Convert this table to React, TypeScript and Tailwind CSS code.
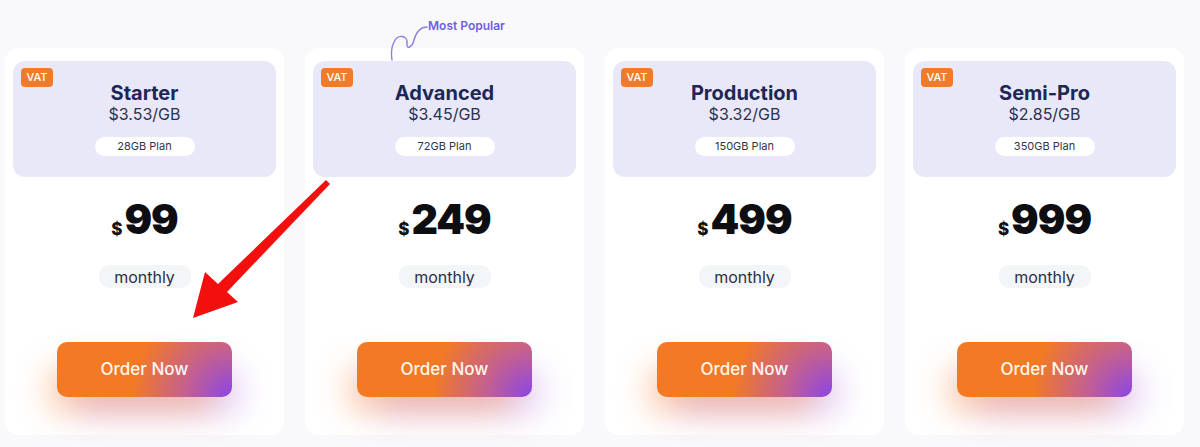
import React from 'react'

const PLANS = [
  { name: 'Starter', perGb: '$3.53/GB', plan: '28GB Plan', price: '99' },
  { name: 'Advanced', perGb: '$3.45/GB', plan: '72GB Plan', price: '249', popular: true },
  { name: 'Production', perGb: '$3.32/GB', plan: '150GB Plan', price: '499' },
  { name: 'Semi-Pro', perGb: '$2.85/GB', plan: '350GB Plan', price: '999' },
]

function PlanCard({ name, perGb, plan, price, popular }: (typeof PLANS)[number]) {
  return (
    <div className="relative flex h-[387px] flex-col items-center rounded-[14px] bg-white px-2 pt-[13px]">
      {popular && (
        <span className="absolute left-[123px] top-[-31px] text-[12px] font-semibold text-[#6d5fe0]">Most Popular</span>
      )}
      <div className="relative flex h-[116px] w-full flex-col items-center rounded-[12px] bg-[#e9e8f8] pt-[21px]">
        <span className="absolute left-2 top-[7px] flex h-[19px] w-[32px] items-center justify-center rounded-[4px] bg-[#f07b2b] text-[11px] font-medium text-white">
          VAT
        </span>
        <h3 className="text-[20px] font-bold leading-[22px] text-[#1d2756]">{name}</h3>
        <p className="text-[16px] leading-[20px] text-[#2c3150]">{perGb}</p>
        <span className="mt-[13px] flex h-[19px] w-[100px] items-center justify-center rounded-full bg-white text-[11px] text-[#333642]">
          {plan}
        </span>
      </div>

      <div className="mt-[20px] flex items-end">
        <span className="mb-[3px] mr-[2px] text-[17px] font-extrabold leading-none text-[#111]">$</span>
        <span className="text-[41px] font-black leading-[44px] tracking-[-1px] text-[#0d0d12]">{price}</span>
      </div>

      <span className="mt-[24px] flex h-[23px] w-[92px] items-center justify-center rounded-[10px] bg-[#f4f5f9] text-[16px] text-[#2d3040]">
        monthly
      </span>

      <button className="mt-[54px] flex h-[55px] w-[175px] items-center justify-center rounded-[10px] bg-[#f27a25] bg-[radial-gradient(circle_at_100%_100%,#8a45e6_0px,#c25f93_45px,#f27a25_100px)] text-[17px] font-medium text-[#fff6ee] shadow-[-14px_20px_32px_-6px_rgba(249,125,40,0.38),14px_22px_32px_-6px_rgba(150,70,230,0.25)]">
        Order Now
      </button>
    </div>
  )
}

export default function App() {
  return (
    <div className="relative h-[447px] w-[1200px] overflow-hidden bg-[#f9f9fb] font-['Inter',sans-serif]">
      <div className="grid grid-cols-[repeat(4,279px)] gap-x-[21px] pl-[5px] pt-[48px]">
        {PLANS.map((p) => (
          <PlanCard key={p.name} {...p} />
        ))}
      </div>

      <svg className="pointer-events-none absolute inset-0" width="1200" height="447" viewBox="0 0 1200 447">
        <path
          d="M427 27 C420 27 416 33 414 40 C412 48 406 50 407 43 C408 36 398 33 394 42 C391 48 391 54 392 60"
          fill="none"
          stroke="#8a80dd"
          strokeWidth="1.4"
          strokeLinecap="round"
        />
        <polygon points="326,180 330,184 227,292 238,302 193,318 205,272 218,284" fill="#f40f0f" />
      </svg>
    </div>
  )
}
